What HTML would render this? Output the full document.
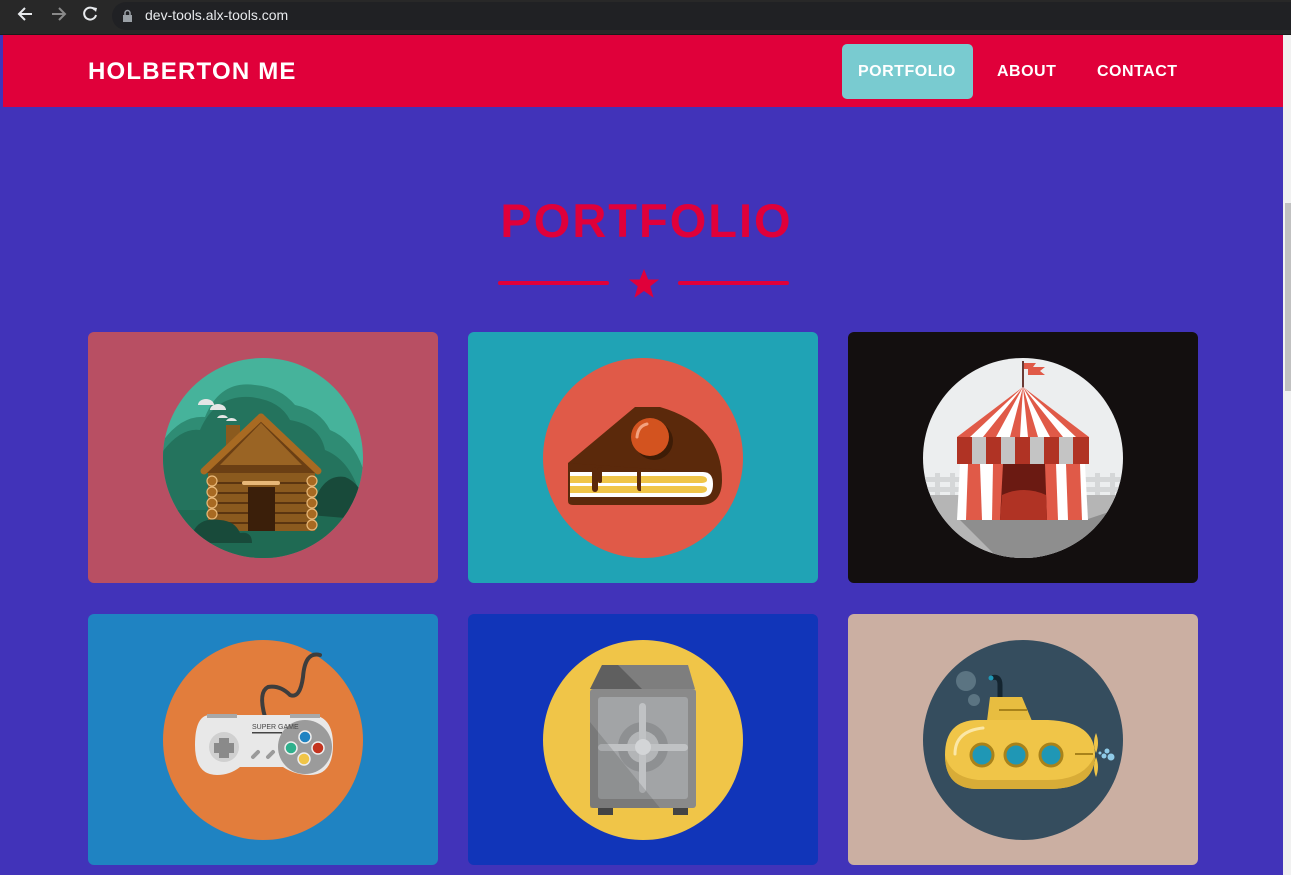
<!DOCTYPE html>
<html><head><meta charset="utf-8"><style>
*{margin:0;padding:0;box-sizing:border-box}
html,body{width:1291px;height:875px;overflow:hidden;background:#4133b9;font-family:"Liberation Sans",Arial,sans-serif}
.chrome{position:absolute;left:0;top:0;width:1291px;height:35px;background:#282828;border-bottom:1px solid #1a1a1a}
.url{position:absolute;left:112px;top:2px;width:1200px;height:28px;background:#202124;border-radius:14px}
.url span{position:absolute;left:33px;top:5px;color:#e8eaed;font-size:14px}
.nav{position:absolute;left:3px;top:35px;width:1280px;height:72px;background:#e0003a}
.brand{position:absolute;left:85px;top:23px;color:#fff;font-weight:bold;font-size:24px;letter-spacing:1.2px}
.btn{position:absolute;top:9px;height:55px;color:#fff;font-weight:bold;font-size:16px;line-height:55px;padding:0 16px;letter-spacing:0.5px}
.pf{left:839px;width:131px;background:#79cbd0;border-radius:5px}
.sb{position:absolute;left:1283px;top:35px;width:8px;height:840px;background:#f1f1f1}
.sbt{position:absolute;left:1285px;top:203px;width:6px;height:188px;background:#c1c1c1}
h1{position:absolute;left:0;width:1291px;top:193px;text-align:center;color:#e0003a;font-size:47px;font-weight:bold;letter-spacing:2px;padding-left:2px}
.ln{position:absolute;top:281px;height:4px;width:111px;background:#e0003a;border-radius:2px}
.card{position:absolute;width:350px;height:251px;border-radius:6px;overflow:hidden}
.card svg{position:absolute;left:72px;top:23px}
</style></head><body>
<div class="chrome">
<svg width="110" height="35" style="position:absolute;left:0;top:0">
<path d="M32 14H19M25 8l-6 6 6 6" stroke="#e8eaed" stroke-width="2" fill="none"/>
<path d="M52 14h13M59 8l6 6-6 6" stroke="#8a8a8a" stroke-width="2" fill="none"/>
<path d="M95 10a6 6 0 1 0 1 5" stroke="#e8eaed" stroke-width="2" fill="none"/><path d="M92 7l5 1-1 4z" fill="#e8eaed"/>
</svg>
<div class="url"><svg width="12" height="14" style="position:absolute;left:10px;top:7px"><rect x="1" y="6" width="9" height="7" fill="#9aa0a6"/><path d="M3 6V4a2.5 2.5 0 0 1 5 0v2" stroke="#9aa0a6" stroke-width="1.5" fill="none"/></svg><span>dev-tools.alx-tools.com</span></div>
</div>
<div class="nav"><div class="brand">HOLBERTON ME</div>
<div class="btn pf">PORTFOLIO</div><div class="btn" style="left:978px">ABOUT</div><div class="btn" style="left:1078px">CONTACT</div></div>
<div class="sb"></div><div class="sbt"></div>
<h1>PORTFOLIO</h1>
<div class="ln" style="left:498px"></div><div class="ln" style="left:678px"></div>
<svg width="36" height="34" style="position:absolute;left:626px;top:267px" viewBox="0 0 36 34"><path d="M18 2l4.2 10.5H33l-8.7 6.8 3.3 11.5L18 24 8.4 30.8l3.3-11.5L3 12.5h10.8z" fill="#e0003a"/></svg>

<div class="card" style="left:88px;top:332px;background:#b84f63">
<svg width="210" height="205" viewBox="0 0 210 205"><defs><clipPath id="c1"><circle cx="103" cy="103" r="100"/></clipPath></defs>
<g clip-path="url(#c1)"><rect width="210" height="205" fill="#46b39b"/>
<path d="M0 90 Q20 60 45 62 Q60 25 95 30 Q120 32 135 50 Q160 55 170 75 Q195 85 205 120 V205 H0z" fill="#2f8c74"/>
<path d="M0 100 Q20 72 40 75 Q55 40 90 42 Q120 45 130 65 Q160 70 165 95 Q190 105 200 140 V205 H0z" fill="#24735d"/>
<rect y="155" width="210" height="50" fill="#1f6a53"/>
<path d="M150 160 Q160 118 185 122 Q205 130 210 165z" fill="#184a3a"/>
<path d="M38 50a8 6 0 0 1 16 0zM50 55a8 6 0 0 1 16 0zM57 63a6 5 0 0 1 11 0zM66 66a6 5 0 0 1 11 0z" fill="#e5e5e5"/>
<rect x="66" y="70" width="14" height="30" fill="#8b5a1e"/>
<rect x="48" y="118" width="107" height="58" fill="#8b5a1e"/>
<g stroke="#5b3510" stroke-width="2"><path d="M48 128H155M48 138H155M48 148H155M48 158H155M48 168H155"/></g>
<path d="M101 63 L44 118 H158Z" fill="#6b3f14"/>
<path d="M101 68 L60 110 H142Z" fill="#9a6424"/>
<path d="M101 62 L44 116" stroke="#a86a22" stroke-width="7" stroke-linecap="round"/><path d="M101 62 L158 116" stroke="#a86a22" stroke-width="7" stroke-linecap="round"/>
<rect x="82" y="126" width="38" height="4" rx="2" fill="#e8b878"/>
<rect x="88" y="132" width="27" height="44" fill="#3b1f0a"/>
<g fill="#a86a22" stroke="#e8b878" stroke-width="1.2"><circle cx="52" cy="126" r="5"/><circle cx="52" cy="137" r="5"/><circle cx="52" cy="148" r="5"/><circle cx="52" cy="159" r="5"/><circle cx="152" cy="126" r="5"/><circle cx="152" cy="137" r="5"/><circle cx="152" cy="148" r="5"/><circle cx="152" cy="159" r="5"/><circle cx="152" cy="170" r="5"/></g>
<path d="M33 177 Q40 162 60 165 Q75 166 80 178 Q92 176 92 188 H30z" fill="#184a3a"/>
</g></svg></div>

<div class="card" style="left:468px;top:332px;background:#20a3b5">
<svg width="210" height="205" viewBox="0 0 210 205"><circle cx="103" cy="103" r="100" fill="#e05a48"/>
<path d="M95 52 L28 108 V146 Q28 150 33 150 H160 Q182 150 182 125 Q182 70 120 52 Z" fill="#5b290b"/>
<path d="M30 117 H163 Q173 117 173 129 Q173 142 163 142 H30Z" fill="#fff"/>
<path d="M30 121 H160 Q167 121 167 125 Q167 128 160 128 H30Z M30 131 H160 Q167 131 167 134 Q167 138 160 138 H30Z" fill="#f0c548"/>
<path d="M28 108 Q28 116 35 116 H97 V132 Q97 137 101 136 V116 H140 Z" fill="#5b290b"/>
<rect x="52" y="112" width="6" height="25" rx="3" fill="#5b290b"/><rect x="58" y="112" width="4" height="16" rx="2" fill="#5b290b"/>
<circle cx="114" cy="86" r="19" fill="#3e1c06"/><circle cx="110" cy="82" r="19" fill="#d3531f"/>
<path d="M97 82 Q98 71 107 69" stroke="#f3a27f" stroke-width="3" fill="none" stroke-linecap="round"/>
</svg></div>

<div class="card" style="left:848px;top:332px;background:#130f0f">
<svg width="210" height="205" viewBox="0 0 210 205"><defs><clipPath id="c3"><circle cx="103" cy="103" r="100"/></clipPath></defs>
<g clip-path="url(#c3)"><rect width="210" height="205" fill="#eceeef"/>
<g fill="#d5d7d8"><rect x="0" y="122" width="210" height="5"/><rect x="0" y="132" width="210" height="5"/><rect x="15" y="118" width="5" height="25"/><rect x="30" y="118" width="5" height="25"/><rect x="175" y="118" width="5" height="25"/><rect x="190" y="118" width="5" height="25"/></g>
<rect y="140" width="210" height="70" fill="#b5b5b5"/>
<path d="M40 165 L80 205 H210 V150 L165 165Z" fill="#8e8e8e"/>
<rect x="102" y="6" width="2" height="28" fill="#6b3a34"/><path d="M104 8H116L113 12H125L120 16L125 20H108V14H104Z" fill="#e05a48"/>
<path d="M103 32 L37 82 H169Z" fill="#fff"/>
<g fill="#e05a48"><path d="M103 32 L37 82 H50Z"/><path d="M103 32 L63 82 H76Z"/><path d="M103 32 L90 82 H100Z"/><path d="M103 32 L108 82 H118Z"/><path d="M103 32 L130 82 H143Z"/><path d="M103 32 L156 82 H169Z"/></g>
<rect x="37" y="82" width="132" height="27" fill="#c4c4c4"/>
<g fill="#b03324"><rect x="37" y="82" width="15" height="27"/><rect x="66" y="82" width="15" height="27"/><rect x="95" y="82" width="15" height="27"/><rect x="124" y="82" width="15" height="27"/><rect x="153" y="82" width="16" height="27"/></g>
<path d="M40 109 L37 165 H168 L165 109Z" fill="#fff"/>
<g fill="#e05a48"><path d="M48 109 L46 165 H62 L60 109Z"/><path d="M73 109 L72 165 H88 L86 109Z"/><path d="M120 109 L122 165 H138 L136 109Z"/><path d="M146 109 L148 165 H162 L160 109Z"/></g>
<path d="M83 109 H125 L127 165 H80Z" fill="#6b1a12"/><path d="M82 140 Q104 130 126 140 L127 165 H80Z" fill="#b03324"/>
</g></svg></div>

<div class="card" style="left:88px;top:614px;background:#1f83c2">
<svg width="210" height="205" viewBox="0 0 210 205"><circle cx="103" cy="103" r="100" fill="#e27d3c"/>
<path d="M105 80 Q98 55 108 50 Q120 48 130 58 Q140 62 143 40 Q145 14 160 18" stroke="#3d3d3d" stroke-width="4" fill="none" stroke-linecap="round"/>
<path d="M50 78 H150 Q173 78 173 108 Q173 138 150 138 Q135 138 123 130 H80 Q70 138 57 138 Q35 138 35 108 Q35 78 50 78Z" fill="#e8e8e8"/>
<rect x="47" y="77" width="30" height="4" fill="#a8a8a8"/><rect x="130" y="77" width="30" height="4" fill="#a8a8a8"/>
<circle cx="64" cy="110" r="15" fill="#d0d0d0"/>
<path d="M59 101h10v5h5v10h-5v5h-10v-5h-5v-10h5z" fill="#8a8a8a"/>
<circle cx="145" cy="110" r="27" fill="#9b9b9b"/>
<circle cx="145" cy="100" r="6" fill="#1f83c2" stroke="#eee" stroke-width="1.5"/><circle cx="131" cy="111" r="6" fill="#2fb08c" stroke="#eee" stroke-width="1.5"/><circle cx="158" cy="111" r="6" fill="#c4341f" stroke="#eee" stroke-width="1.5"/><circle cx="144" cy="122" r="6" fill="#f0c548" stroke="#eee" stroke-width="1.5"/>
<path d="M93 120l5-5M108 120l5-5" stroke="#9b9b9b" stroke-width="4" stroke-linecap="round"/>
<text x="92" y="92" font-size="7" fill="#444" font-family="Liberation Sans">SUPER GAME</text><rect x="92" y="95" width="30" height="1.5" fill="#444"/>
</svg></div>

<div class="card" style="left:468px;top:614px;background:#1135b9">
<svg width="210" height="205" viewBox="0 0 210 205"><circle cx="103" cy="103" r="100" fill="#f0c548"/>
<path d="M62 28 H148 L155 52 H50Z" fill="#7e7e7e"/><path d="M62 28 H78 L102 52 H50Z" fill="#5f5f5f"/>
<rect x="50" y="52" width="106" height="119" rx="3" fill="#8a8a8a"/>
<rect x="58" y="60" width="90" height="102" rx="3" fill="#a2a4a6"/>
<circle cx="103" cy="110" r="25" fill="#8e9092"/><circle cx="103" cy="110" r="16" fill="#b3b5b7"/>
<rect x="99" y="66" width="7" height="90" rx="3.5" fill="#c0c2c4"/><rect x="58" y="107" width="90" height="7" rx="3.5" fill="#c0c2c4"/>
<circle cx="103" cy="110" r="8" fill="#d3d5d7"/>
<path d="M50 85 L120 171 H50Z" fill="#000" opacity="0.12"/>
<rect x="58" y="171" width="15" height="7" fill="#444"/><rect x="133" y="171" width="15" height="7" fill="#444"/>
</svg></div>

<div class="card" style="left:848px;top:614px;background:#cbafa2">
<svg width="210" height="205" viewBox="0 0 210 205"><circle cx="103" cy="103" r="100" fill="#354d5e"/>
<circle cx="46" cy="44" r="10" fill="#5b7482"/><circle cx="54" cy="63" r="6" fill="#5b7482"/>
<path d="M71 41 Q80 38 80 48 V62" stroke="#142530" stroke-width="5" fill="none"/><circle cx="71" cy="41" r="2.5" fill="#1f97b5"/>
<path d="M70 60 H102 L112 84 H67Z" fill="#e8bd40"/>
<rect x="79" y="72" width="28" height="2" fill="#a8821a"/>
<path d="M58 83 H128 Q175 85 175 118 Q175 152 128 152 H58 Q25 152 25 118 Q25 83 58 83Z" fill="#f0c548"/>
<path d="M25 118 Q30 140 58 143 H128 Q165 143 175 118 Q175 152 128 152 H58 Q25 152 25 118Z" fill="#d8ac37"/>
<path d="M35 117 Q35 94 63 91" stroke="#fbe7a6" stroke-width="3" fill="none" stroke-linecap="round"/>
<g fill="#1f97b5" stroke="#a8821a" stroke-width="3"><circle cx="62" cy="118" r="11"/><circle cx="96" cy="118" r="11"/><circle cx="131" cy="118" r="11"/></g>
<rect x="155" y="116" width="18" height="2" fill="#a8821a"/>
<path d="M176 96 Q180 106 176 116 Q172 106 176 96Z M176 120 Q180 130 176 140 Q172 130 176 120Z" fill="#f0c548"/>
<g fill="#8fcbe8"><circle cx="180" cy="116" r="1.5"/><circle cx="184" cy="119" r="2.5"/><circle cx="187" cy="114" r="2.5"/><circle cx="191" cy="120" r="3.5"/></g>
</svg></div>
</body></html>
